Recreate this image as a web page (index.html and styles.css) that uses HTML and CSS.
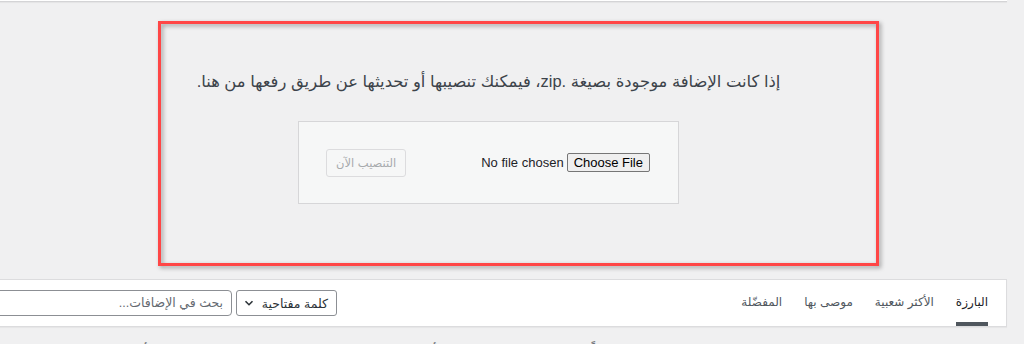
FILE: index.html
```html
<!DOCTYPE html>
<html lang="ar">
<head>
    <meta charset="UTF-8">
    <title>إضافة إضافات</title>
    <link rel="stylesheet" href="styles.css">
</head>
<body>
<div class="wrap" dir="rtl">
    <div class="top-panel"></div>

    <div class="upload-plugin">
        <p class="install-help">إذا كانت الإضافة موجودة بصيغة .zip، فيمكنك تنصيبها أو تحديثها عن طريق رفعها من هنا.</p>
        <form class="upload-form">
            <input class="file-input" type="file" name="pluginzip">
            <button class="button" type="submit" disabled>التنصيب الآن</button>
        </form>
    </div>

    <div class="wp-filter">
        <ul class="filter-links">
            <li><a class="current" href="#">البارزة</a></li>
            <li><a href="#">الأكثر شعبية</a></li>
            <li><a href="#">موصى بها</a></li>
            <li><a href="#">المفضّلة</a></li>
        </ul>
        <div class="search-form">
            <div class="select">
                <span>كلمة مفتاحية</span>
                <svg class="chevron" width="10" height="10" viewBox="0 0 10 10">
                    <path d="M1.5 3.2 L5 6.7 L8.5 3.2" fill="none" stroke="#2c3338" stroke-width="1.6"/>
                </svg>
            </div>
            <input class="search-input" type="search" placeholder="بحث في الإضافات...">
        </div>
    </div>

    <p class="intro">الإضافات توسّع وتزيد من وظائف ووردبريس. يمكنك تنصيب الإضافات تلقائياً من دليل إضافات ووردبريس أو رفع إضافة بصيغة .zip عن طريق النقر على الزر في أعلى هذه الصفحة.</p>
</div>

<!-- annotation frame -->
<div class="highlight"></div>
</body>
</html>
```

FILE: styles.css
```css
* {
    margin: 0;
    padding: 0;
}

html, body {
    overflow: hidden;
}

body {
    background: #f0f0f1;
    color: #3c434a;
    font-family: "Liberation Sans", "DejaVu Sans", sans-serif;
    font-size: 13px;
    position: relative;
    height: 344px;
}

.wrap {
    width: 1037px;
    margin-left: -30px;
}

.top-panel {
    height: 1px;
    background: #fff;
    border-bottom: 1px solid #d4d4d6;
    border-left: 1px solid #d4d4d6;
    box-shadow: 0 1px 1px rgba(0, 0, 0, 0.05);
}

/* upload */
.upload-plugin {
    padding-top: 69px;
    text-align: center;
}

.install-help {
    font-size: 16.4px;
    line-height: 20px;
    color: #3c434a;
}

.upload-form {
    display: flex;
    align-items: center;
    justify-content: space-between;
    box-sizing: border-box;
    width: 381px;
    height: 83px;
    margin: 30px auto 0;
    padding: 0 28px 0 27px;
    background: #f6f7f7;
    border: 1px solid #d6d6d8;
}

.file-input {
    font-family: "Liberation Sans", sans-serif;
    font-size: 13px;
    color: #1d2327;
    width: 200px;
}

.file-input::file-selector-button {
    font-family: "Liberation Sans", sans-serif;
    font-size: 13px;
    color: #000;
    background: #efefef;
    border: 1px solid #767676;
    border-radius: 2px;
    padding: 1px 6px;
    margin-left: 3px;
}

.button {
    height: 28px;
    padding: 0 9px;
    font-family: "DejaVu Sans", sans-serif;
    font-size: 11.5px;
    color: #a7aaad;
    background: #f6f7f7;
    border: 1px solid #dcdcde;
    border-radius: 3px;
}

/* filter bar */
.wp-filter {
    display: flex;
    align-items: center;
    box-sizing: border-box;
    height: 48px;
    margin-top: 75px;
    padding: 0 18px 0 10px;
    background: #fff;
    border: 1px solid #dcdcde;
    box-shadow: 0 1px 1px rgba(0, 0, 0, 0.04);
}

.filter-links {
    display: flex;
    gap: 22px;
    height: 100%;
    list-style: none;
}

.filter-links a {
    display: flex;
    align-items: center;
    box-sizing: border-box;
    height: 100%;
    padding-top: 2px;
    border-bottom: 4px solid transparent;
    color: #50575e;
    text-decoration: none;
    font-size: 12px;
}

.filter-links a.current {
    border-bottom-color: #50575e;
    color: #1d2327;
}

.search-form {
    display: flex;
    gap: 4px;
    margin-right: auto;
}

.select {
    display: flex;
    align-items: center;
    justify-content: space-between;
    box-sizing: border-box;
    width: 101px;
    height: 26px;
    padding: 0 8px 0 7px;
    background: #fff;
    border: 1px solid #8c8f94;
    border-radius: 3px;
    color: #2c3338;
    font-size: 12.5px;
}

.search-input {
    box-sizing: border-box;
    width: 251px;
    height: 26px;
    padding: 0 8px;
    background: #fff;
    border: 1px solid #8c8f94;
    border-radius: 4px;
    font-family: "Liberation Sans", "DejaVu Sans", sans-serif;
    font-size: 12.5px;
    color: #2c3338;
}

.search-input::placeholder {
    color: #646970;
}

.intro {
    margin-top: 14px;
    padding-right: 18px;
    font-size: 13px;
    line-height: 20px;
    color: #3c434a;
}

/* red annotation frame */
.highlight {
    position: absolute;
    left: 158px;
    top: 21px;
    width: 721px;
    height: 245px;
    box-sizing: border-box;
    border: 3px solid #ff4646;
    filter: drop-shadow(2px 2px 2px rgba(0, 0, 0, 0.35));
}
```
